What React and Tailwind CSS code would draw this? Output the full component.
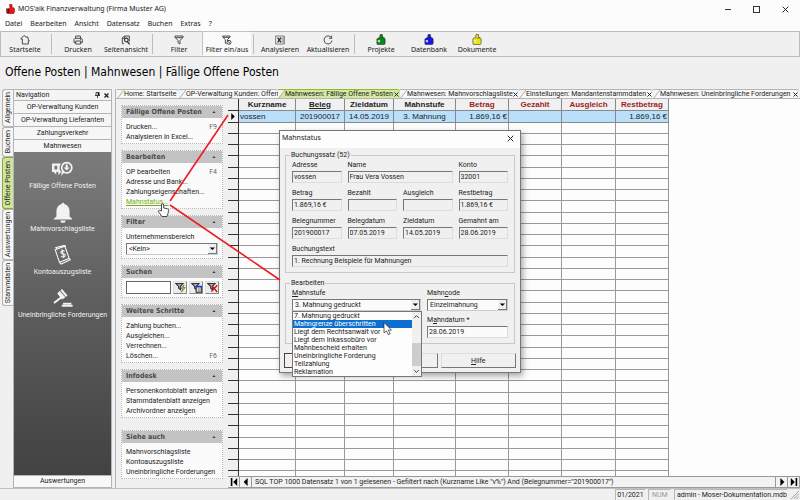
import React from "react";
import clsx from "clsx";

const LogoIcon = ({ color }) => (
  <svg viewBox="0 0 20 24" className="h-[11px] w-[10px]">
    <path
      d="M8 1h5l1 7h3l2 3v10l-2 2H2l-1-2V11l4-3h2z"
      fill={color}
      stroke="#222"
      strokeWidth="1.2"
    />
    <path d="M3 13h5v5H3z" fill="#e4e4e4" opacity=".85" />
    <path d="M9 9h7" stroke="#222" strokeWidth="1" fill="none" />
  </svg>
);

const AppLogo = () => (
  <svg viewBox="0 0 26 30" className="w-[9px] h-[10px]">
    <path
      d="M10 1h7l1 5v5h5l2 3v11l-3 4H5l-4-3V14h7l3-3z"
      fill="#e8141c"
      stroke="#7a1010"
      strokeWidth="1.5"
    />
    <path d="M2 18h6M2 25h6M8 14v12" stroke="#301010" strokeWidth="2.5" />
  </svg>
);

const Stroke = ({ children, className = "w-[10px] h-[10px]" }) => (
  <svg
    viewBox="0 0 30 30"
    className={className}
    fill="none"
    stroke="#333"
    strokeWidth="2.6"
    strokeLinejoin="round"
  >
    {children}
  </svg>
);

const TOOL_ICONS = {
  home: (
    <Stroke>
      <path d="M7 12v15h18V17h3l-4-5V6h-7l-3-4-4 1-8 9z" />
    </Stroke>
  ),
  print: (
    <Stroke>
      <path d="M8 10V3h14l1 7M7 23H3V13l3-3h18l4 3v10h-4M8 18h15v9H8zM21 14h3" />
    </Stroke>
  ),
  preview: (
    <Stroke>
      <path d="M9 26H4V9l6-6h15v17M4 10h7V3" />
      <circle cx="16" cy="15" r="5.5" strokeWidth="3.4" />
      <path d="M19 20l7 8" strokeWidth="4" />
    </Stroke>
  ),
  filter: (
    <Stroke>
      <path d="M3 3h24v4l-9 9v11l-6-4v-7L3 7zM4 8h22" />
    </Stroke>
  ),
  filterOff: (
    <Stroke>
      <path d="M2 3h22v3l-8 8v4M2 3v3l8 8v11l4 2M3 7h20" />
      <circle cx="21" cy="22" r="6" />
      <path d="M17 18l8 8" />
    </Stroke>
  ),
  excel: (
    <Stroke>
      <path d="M2 3h26v24H2zM20 9h7M20 15h7M20 21h7" strokeWidth="1.8" />
      <path d="M8 8l10 14M18 8L8 22" strokeWidth="4.5" />
    </Stroke>
  ),
  refresh: (
    <Stroke>
      <path d="M25 8a12 12 0 1 0 2 9M26 2v8h-8" />
    </Stroke>
  ),
  green: <LogoIcon color="#0a8a14" />,
  blue: <LogoIcon color="#1616f0" />,
  yellow: <LogoIcon color="#ece214" />,
};

const TOOLBAR = [
  [["home", "Startseite"]],
  [["print", "Drucken"], ["preview", "Seitenansicht"]],
  [["filter", "Filter"], ["filterOff", "Filter ein/aus"]],
  [["excel", "Analysieren"], ["refresh", "Aktualisieren"]],
  [["green", "Projekte"], ["blue", "Datenbank"], ["yellow", "Dokumente"]],
];

const MENU = ["Datei", "Bearbeiten", "Ansicht", "Datensatz", "Buchen", "Extras", "?"];

const SIDE_TABS = [
  { label: "Allgemein", size: "h-[38px]" },
  { label: "Buchen", size: "h-[30px]" },
  { label: "Offene Posten", size: "h-[52px]", active: true },
  { label: "Auswertungen", size: "h-[51px]" },
  { label: "Stammdaten", size: "h-[46px]" },
];

const DOC_TABS = [
  { label: "Home: Startseite", size: "w-[62px]" },
  { label: "OP-Verwaltung Kunden: Offen", size: "w-[99px]" },
  { label: "Mahnwesen: Fällige Offene Posten", size: "w-[122px]", active: true, closable: true },
  { label: "Mahnwesen: Mahnvorschlagsliste", size: "w-[119px]", closable: true },
  { label: "Einstellungen: Mandantenstammdaten", size: "w-[134px]", closable: true },
  { label: "Mahnwesen: Uneinbringliche Forderungen", size: "w-[146px]", closable: true },
];

const COLUMNS = [
  { label: "Kurzname", size: "w-[57px]", value: "vossen", align: "text-left" },
  { label: "Beleg", size: "w-[49px]", value: "201900017", align: "text-center", underline: true },
  { label: "Zieldatum", size: "w-[49px]", value: "14.05.2019", align: "text-center" },
  { label: "Mahnstufe", size: "w-[62px]", value: "3. Mahnung", align: "text-center" },
  { label: "Betrag", size: "w-[53px]", value: "1.869,16 €", align: "text-right", red: true },
  { label: "Gezahlt", size: "w-[53px]", value: "", align: "text-right", red: true },
  { label: "Ausgleich", size: "w-[54px]", value: "", align: "text-right", red: true },
  { label: "Restbetrag", size: "w-[53px]", value: "1.869,16 €", align: "text-right", red: true },
];

const OPTIONS = [
  "7. Mahnung gedruckt",
  "Mahngrenze überschritten",
  "Liegt dem Rechtsanwalt vor",
  "Liegt dem Inkassobüro vor",
  "Mahnbescheid erhalten",
  "Uneinbringliche Forderung",
  "Teilzahlung",
  "Reklamation",
];

const Cross = ({ className = "w-[5px] h-[5px]", width = 2 }) => (
  <svg viewBox="0 0 10 10" className={className} stroke="currentColor" strokeWidth={width}>
    <path d="M1 1l8 8M9 1L1 9" />
  </svg>
);

const TitleBar = () => (
  <header className="bg-[#fcfcfc] font-['Noto_Sans',sans-serif]">
    <div className="flex items-center h-[18px] pl-[6px] text-[7px] text-[#222]">
      <AppLogo />
      <span className="ml-[3px]">MOS'aik Finanzverwaltung (Firma Muster AG)</span>
      <div className="ml-auto flex items-center gap-[22px] pr-[11px]">
        <button aria-label="Minimieren" className="w-[6px] h-px bg-[#333]" />
        <button aria-label="Maximieren" className="w-[7px] h-[7px] border border-[#333]" />
        <button aria-label="Schließen">
          <Cross className="w-[7px] h-[7px]" width={1.4} />
        </button>
      </div>
    </div>
    <nav className="flex h-[13px] items-center gap-2 pl-[5px] text-[7px] text-[#222]">
      {MENU.map((item) => (
        <button key={item}>{item}</button>
      ))}
    </nav>
  </header>
);

const Toolbar = () => (
  <div className="flex h-[26px] items-stretch border border-[#bcbcbc] font-['Noto_Sans',sans-serif]">
    {TOOLBAR.map((group, i) => (
      <div key={i} className="flex">
        {i > 0 && <div className="w-px my-[2px] mx-[2px] bg-[#bcbcbc]" />}
        {group.map(([icon, label]) => (
          <button
            key={label}
            className={clsx(
              "flex w-12 flex-col items-center pt-[2px] text-[7px] leading-[10px] whitespace-nowrap text-[#222]",
              icon === "filterOff" && "bg-[#fafafa] shadow-[-1px_-1px_0_#c4c4c4]"
            )}
          >
            <span className="flex h-[11px] items-center">{TOOL_ICONS[icon]}</span>
            {label}
          </button>
        ))}
      </div>
    ))}
  </div>
);

const SideTabs = () => (
  <div className="flex w-[13px] shrink-0 flex-col pl-[2px]">
    {SIDE_TABS.map((tab) => (
      <button
        key={tab.label}
        className={clsx(
          "flex items-center justify-center rounded-l-[3px] border border-r-0",
          tab.size,
          tab.active ? "border-[#8aa83c] bg-[#cfe59a]" : "border-[#b4b4b4] bg-[#f6f6f6]"
        )}
      >
        <span className="rotate-180 whitespace-nowrap leading-[9px] [writing-mode:vertical-rl]">
          {tab.label}
        </span>
      </button>
    ))}
  </div>
);

const NavIcon = ({ icon, label }) => (
  <button className="flex h-[43px] flex-col items-center text-[#f2f2f2]">
    <span className="flex h-[22px] items-center">{icon}</span>
    <span className="mt-px leading-[10px]">{label}</span>
  </button>
);

const Navigation = () => (
  <aside className="flex w-[99px] shrink-0 flex-col border-x border-[#b4b4b4]">
    <div className="flex h-[11px] items-center border-t border-[#b4b4b4] bg-[#f4f4f4] pl-[2px] pr-[2px]">
      <span>Navigation</span>
      <svg viewBox="0 0 10 12" className="ml-auto h-[6px] w-[5px]" stroke="#111" fill="none">
        <path d="M2 1h6v6M2 1v6M0 7h10M5 7v5" strokeWidth="1.5" />
        <path d="M7 1v6" strokeWidth="3" />
      </svg>
      <button aria-label="Navigation schließen" className="ml-1">
        <Cross width={2.6} />
      </button>
    </div>
    {["OP-Verwaltung Kunden", "OP-Verwaltung Lieferanten", "Zahlungsverkehr", "Mahnwesen"].map(
      (item) => (
        <button key={item} className="h-[13px] border-t border-[#b4b4b4] bg-[#f6f6f6] leading-[12px]">
          {item}
        </button>
      )
    )}
    <div className="flex flex-1 flex-col bg-linear-to-b from-[#7c7c7c] via-[#5c5c5c] to-[#424242] pt-[6px]">
      <NavIcon
        label="Fällige Offene Posten"
        icon={
          <svg viewBox="0 0 60 48" className="h-[17px] w-[21px]" fill="currentColor">
            <path d="M0 7h26a18 18 0 0 0 0 24L18 40v-9h-6v8l-7-8H0zM7 13v11h8V13z" fillRule="evenodd" />
            <path d="M42 2a17 17 0 1 1-8 32l-8 8 2-14A17 17 0 0 1 42 2zm0 5a12 12 0 1 0 .1 0z" fillRule="evenodd" />
            <path d="M39 10h6v8h6l-9 9-9-9h6z" />
          </svg>
        }
      />
      <NavIcon
        label="Mahnvorschlagsliste"
        icon={
          <svg viewBox="0 0 60 64" className="h-[21px] w-[20px]" fill="currentColor">
            <path d="M26 6a4 4 0 0 1 8 0c11 3 16 11 16 22v16l8 7v2H2v-2l8-7V28C10 17 15 9 26 6zM22 56h16a8 7 0 0 1-16 0z" />
          </svg>
        }
      />
      <NavIcon
        label="Kontoauszugsliste"
        icon={
          <svg viewBox="0 0 50 60" className="h-[20px] w-[17px]" fill="none" stroke="currentColor">
            <path d="M3 14L32 4l13 36-29 12zM8 12L5 8 32 1l3 4M45 40l3 4-27 13-5-5" strokeWidth="3.4" />
            <path
              d="M31 19c-3-4-12-2-11 3 1 6 11 2 13 8 1 6-9 8-12 3M23 13l6 26"
              strokeWidth="3.4"
            />
          </svg>
        }
      />
      <NavIcon
        label="Uneinbringliche Forderungen"
        icon={
          <svg viewBox="0 0 60 56" className="h-[18px] w-[20px]" fill="currentColor">
            <path d="M22 4l5-4 17 20-5 5zM15 10l5-4 17 20-5 4zM12 14l4-3 15 18-4 4z" />
            <path d="M22 24l4 5L4 46l-4-5zM30 43h26v5H30zM26 49h34v6H26z" />
          </svg>
        }
      />
    </div>
    <button className="h-[13px] border-y border-[#b4b4b4] bg-[#f8f8f8] leading-[11px]">
      Auswertungen
    </button>
  </aside>
);

const Panel = ({ title, items, children, className }) => (
  <section className={clsx("border border-dotted border-[#b8b8b8] bg-[#fbfbfb]", className)}>
    <h2 className="flex h-[12px] items-center justify-between bg-[#c3c3c3] pl-1 pr-[6px] font-['DejaVu_Sans_Condensed',sans-serif] font-bold text-[#4a4a4a]">
      {title}
      <svg viewBox="0 0 6 4" className="h-[2px] w-[4px]" fill="#333">
        <path d="M3 0l3 4H0z" />
      </svg>
    </h2>
    {items && (
      <ul className="px-1 pt-1 pb-px leading-[10px] whitespace-nowrap">
        {items.map(([label, key, active]) => (
          <li key={label} className="flex justify-between pr-[1px]">
            <a href="#" className={active ? "text-[#76ac1a] underline" : "text-[#222]"}>
              {label}
            </a>
            {key && <span className="text-[#666]">{key}</span>}
          </li>
        ))}
      </ul>
    )}
    {children}
  </section>
);

const Arrow = () => (
  <svg
    viewBox="0 0 10 12"
    className="pointer-events-none absolute right-px top-px h-[10px] w-[9px] border-b border-r border-[#777] bg-[#f0f0f0]"
  >
    <path d="M2 4.500h7L5.500 8z" fill="#000" />
  </svg>
);

const Combo = ({ id, value, className }) => (
  <div className={clsx("relative", className)}>
    <select
      id={id}
      className="block h-[12px] w-full appearance-none border border-[#777] border-b-[#ccc] border-r-[#ccc] bg-[#fbfbfb] pl-[2px] leading-[10px] outline-none"
    >
      <option>{value}</option>
    </select>
    <Arrow />
  </div>
);

const SearchButton = ({ label, children }) => (
  <button
    aria-label={label}
    className="flex h-[13px] w-[14px] items-center justify-center border border-[#ddd] border-b-[#888] border-r-[#888] bg-[#ececec]"
  >
    <svg viewBox="0 0 30 30" className="h-[11px] w-[11px]" fill="none" strokeWidth="3">
      <path d="M2 4h20l-7 8v9l-5-4v-5z" stroke="#333" fill="#aab" />
      {children}
    </svg>
  </button>
);

const TaskPane = () => (
  <div className="flex w-[113px] shrink-0 flex-col gap-[6px] border-l border-[#b4b4b4] px-[5px] pt-[6px]">
    <Panel
      title="Fällige Offene Posten"
      items={[["Drucken...", "F9"], ["Analysieren in Excel..."]]}
    />
    <Panel
      title="Bearbeiten"
      items={[
        ["OP bearbeiten", "F4"],
        ["Adresse und Bank..."],
        ["Zahlungseigenschaften..."],
        ["Mahnstatus...", null, true],
      ]}
    />
    <Panel title="Filter">
      <div className="px-1 pt-1 pb-[3px]">
        <label htmlFor="bereich" className="block leading-[10px]">
          Unternehmensbereich
        </label>
        <Combo id="bereich" value="<Kein>" className="mt-px" />
      </div>
    </Panel>
    <Panel title="Suchen">
      <div className="flex items-center gap-[2px] pl-1 pr-[3px] py-[3px]">
        <input
          aria-label="Suchen"
          className="h-[13px] min-w-0 flex-1 border border-[#666] bg-white"
        />
        <SearchButton label="Suche starten">
          <path d="M25 8l-9 10h6l-5 10 11-13h-6z" fill="#f4e400" stroke="#444" strokeWidth="1.5" />
        </SearchButton>
        <SearchButton label="Suche im Formular">
          <path d="M14 12h14v16H14z" fill="#fff" stroke="#223" />
          <path d="M14 13h14" stroke="#1438e0" strokeWidth="4" />
          <path d="M18 19h7M18 24h7" stroke="#334" strokeWidth="2" />
        </SearchButton>
        <SearchButton label="Suche löschen">
          <path d="M13 10l15 17M28 9L12 26" stroke="#c01818" strokeWidth="4" />
        </SearchButton>
      </div>
    </Panel>
    <Panel
      title="Weitere Schritte"
      items={[["Zahlung buchen..."], ["Ausgleichen..."], ["Verrechnen..."], ["Löschen...", "F6"]]}
    />
    <Panel
      title="Infodesk"
      items={[
        ["Personenkontoblatt anzeigen"],
        ["Stammdatenblatt anzeigen"],
        ["Archivordner anzeigen"],
      ]}
    />
    <Panel
      title="Siehe auch"
      className="mt-[6px]"
      items={[["Mahnvorschlagsliste"], ["Kontoauszugsliste"], ["Uneinbringliche Forderungen"]]}
    />
  </div>
);

const DocTabs = () => (
  <div className="flex h-[10px] shrink-0 border-b border-l border-[#b4b4b4] pl-px">
    {DOC_TABS.map((tab) => (
      <div
        key={tab.label}
        className={clsx(
          "flex shrink-0 items-center rounded-tr-[3px] border-t",
          tab.size,
          tab.active ? "border-[#8cc020] bg-[#d3e8a0]" : "border-[#b4b4b4] bg-[#f8f8f8]"
        )}
      >
        <svg viewBox="0 0 8 10" className="h-[9px] w-[7px] shrink-0" preserveAspectRatio="none">
          <path d="M0 0h8L0 10z" fill="#f4f4f4" />
          <path d="M8 0L0 10" stroke="#a4a4a4" />
        </svg>
        <button className="whitespace-nowrap text-left leading-[9px]">{tab.label}</button>
        {tab.closable && (
          <button aria-label="Register schließen" className="ml-auto mr-px shrink-0">
            <Cross />
          </button>
        )}
      </div>
    ))}
  </div>
);

const DataGrid = () => (
  <div className="min-h-0 flex-1 overflow-hidden bg-[#fdfdfd]">
    <table className="table-fixed border-separate border-spacing-0 w-[441px] font-['Liberation_Sans',sans-serif] text-[8px] leading-[10px]">
      <thead>
        <tr className="h-[12px]">
          <th className="w-[11px] border-b border-r border-[#333] bg-[#f0f0f0] p-0" />
          {COLUMNS.map((col) => (
            <th
              key={col.label}
              className={clsx(
                "border-b border-r border-[#888] bg-[#f0f0f0] p-0 font-bold",
                col.size,
                col.red && "text-[#9c1c1c]",
                col.underline && "underline"
              )}
            >
              {col.label}
            </th>
          ))}
        </tr>
      </thead>
      <tbody>
        <tr className="h-[12px]">
          <td className="border-b border-r border-[#333] bg-[#f0f0f0] p-0">
            <svg viewBox="0 0 4 8" className="ml-[3px] h-[7px] w-[4px]">
              <path d="M0 0l4 4-4 4z" />
            </svg>
          </td>
          {COLUMNS.map((col) => (
            <td
              key={col.label}
              className={clsx(
                "whitespace-nowrap border-b border-r border-[#888] bg-[#b9dffb] py-0 pl-px pr-px text-[#222]",
                col.align
              )}
            >
              {col.value}
            </td>
          ))}
        </tr>
        {Array.from({ length: 32 }, (_, row) => (
          <tr key={row} className={row % 4 === 3 ? "h-[12px]" : "h-[11px]"}>
            <td className="border-b border-r border-[#333] bg-[#f0f0f0] p-0" />
            {COLUMNS.map((col) => (
              <td key={col.label} className="border-b border-r border-[#999] p-0" />
            ))}
          </tr>
        ))}
      </tbody>
    </table>
  </div>
);

const RecordButton = ({ label, d }) => (
  <button
    aria-label={label}
    className="flex w-[12px] items-center justify-center border-r border-[#999] bg-[#f2f2f2]"
  >
    <svg viewBox="0 0 10 10" className="h-[8px] w-[8px]">
      <path d={d} />
    </svg>
  </button>
);

const RecordBar = () => (
  <div className="flex h-[12px] shrink-0 border-y border-[#999] bg-[#f2f2f2]">
    <RecordButton label="Erster Datensatz" d="M1 0h2v10H1zM9 0v10L4 5z" />
    <RecordButton label="Vorheriger Datensatz" d="M7 0v10L2 5z" />
    <span className="flex-1 overflow-hidden whitespace-nowrap border-r border-[#999] pl-[3px] leading-[10px]">
      SQL TOP 1000 Datensatz 1 von 1 gelesenen - Gefiltert nach (Kurzname Like "v%") And
      (Belegnummer="201900017")
    </span>
    <RecordButton label="Nächster Datensatz" d="M3 0v10l5-5z" />
    <RecordButton label="Letzter Datensatz" d="M1 0v10l5-5zM7 0h2v10H7z" />
  </div>
);

const Field = ({ id, label, value, className, white }) => (
  <div className={className}>
    <label htmlFor={id} className="block h-[11px] leading-[10px]">
      {label}
    </label>
    <input
      id={id}
      defaultValue={value}
      className={clsx(
        "block h-[12px] w-full border border-[#777] border-b-[#ddd] border-r-[#ddd] pl-px leading-[10px]",
        white ? "bg-[#fbfbfb]" : "bg-[#f0f0f0]"
      )}
    />
  </div>
);

const MahnstatusDialog = () => (
  <div
    role="dialog"
    aria-label="Mahnstatus"
    className="absolute left-[279px] top-[130px] w-[242px] border border-[#777] bg-[#f0f0f0] pb-1 shadow-[2px_3px_6px_rgba(0,0,0,0.35)]"
  >
    <div className="flex h-[17px] items-center justify-between bg-[#fdfdfd] pl-[2px] pr-[6px] pb-[3px] font-['Noto_Sans',sans-serif]">
      <span>Mahnstatus</span>
      <button aria-label="Dialog schließen">
        <Cross className="h-[7px] w-[7px]" width={1.4} />
      </button>
    </div>

    <fieldset className="mx-[5px] mt-[2px] border border-[#c8c8c8] px-[6px] pb-[5px]">
      <legend className="-ml-[2px] px-px leading-[10px]">Buchungssatz (52)</legend>
      <div className="grid grid-cols-4 gap-x-[6px] gap-y-[5px]">
        <Field id="adresse" label="Adresse" value="vossen" />
        <Field id="name" label="Name" value="Frau Vera Vossen" className="col-span-2" />
        <Field id="konto" label="Konto" value="32001" />
        <Field id="betrag" label="Betrag" value="1.869,16 €" />
        <Field id="bezahlt" label="Bezahlt" value="" />
        <Field id="ausgleich" label="Ausgleich" value="" />
        <Field id="restbetrag" label="Restbetrag" value="1.869,16 €" />
        <Field id="belegnummer" label="Belegnummer" value="201900017" />
        <Field id="belegdatum" label="Belegdatum" value="07.05.2019" />
        <Field id="zieldatum" label="Zieldatum" value="14.05.2019" />
        <Field id="gemahnt" label="Gemahnt am" value="28.06.2019" />
        <Field
          id="text"
          label="Buchungstext"
          value="1. Rechnung Beispiele für Mahnungen"
          className="col-span-4"
        />
      </div>
    </fieldset>

    <fieldset className="mx-[5px] mt-[5px] border border-[#c8c8c8] px-[6px] pb-[5px]">
      <legend className="-ml-[2px] px-px leading-[10px]">Bearbeiten</legend>
      <div className="flex gap-[6px]">
        <div className="relative w-[129px]">
          <label htmlFor="stufe" className="block h-[11px] leading-[10px]">
            <u>M</u>ahnstufe
          </label>
          <Combo id="stufe" value="3. Mahnung gedruckt" />
          {/* Opened list of the combo box */}
          <div className="absolute left-0 top-[23px] flex w-[130px] border border-[#777] bg-[#fdfdfd]">
            <ul role="listbox" aria-label="Mahnstufe" className="flex-1 leading-[8px]">
              {OPTIONS.map((option, i) => (
                <li
                  key={option}
                  role="option"
                  aria-selected={i === 1}
                  className={clsx("pl-px", i === 1 && "bg-[#0a6fd0] text-white")}
                >
                  {option}
                </li>
              ))}
            </ul>
            <div className="flex w-[9px] flex-col items-center bg-[#f0f0f0] py-[3px]">
              <svg viewBox="0 0 8 5" className="h-[3px] w-[5px]" fill="none" stroke="#333" strokeWidth="1.5">
                <path d="M0 5l4-4 4 4" />
              </svg>
              <div className="mt-[25px] h-[23px] w-full bg-[#cdcdcd]" />
              <svg viewBox="0 0 8 5" className="mt-auto h-[3px] w-[5px]" fill="none" stroke="#333" strokeWidth="1.5">
                <path d="M0 0l4 4 4-4" />
              </svg>
            </div>
          </div>
        </div>
        <div className="flex-1">
          <label htmlFor="code" className="block h-[11px] leading-[10px]">
            Mahn<u>c</u>ode
          </label>
          <Combo id="code" value="Einzelmahnung" />
          <Field
            id="datum"
            label={
              <>
                M<u>a</u>hndatum *
              </>
            }
            value="28.06.2019"
            className="mt-1"
            white
          />
        </div>
      </div>
    </fieldset>

    <div className="mt-[9px] grid grid-cols-3 gap-[3px] px-1">
      <button aria-label="OK" className="h-[15px] border border-[#444] bg-[#f0f0f0]" />
      <button
        aria-label="Abbrechen"
        className="h-[15px] border border-[#ddd] border-b-[#777] border-r-[#777] bg-[#f0f0f0]"
      />
      <button className="h-[15px] border border-[#ddd] border-b-[#777] border-r-[#777] bg-[#f0f0f0] leading-[12px]">
        <u>H</u>ilfe
      </button>
    </div>
  </div>
);

const Annotations = () => (
  <svg
    viewBox="0 0 800 500"
    className="pointer-events-none absolute left-0 top-0 h-[500px] w-[800px]"
    fill="none"
  >
    <path d="M228 115L170 201M170 205L280 280" stroke="#ee1c24" strokeWidth="1.6" />
    <path
      d="M161.500 211V205q0-1.300 1.100-1.300t1.100 1.300v3l4 .8q1 .4.900 1.500l-.6 3.200-1 3h-5l-3.400-4.600q-.4-1.500.9-1.600z"
      fill="#fff"
      stroke="#222"
      strokeWidth=".8"
    />
    <path
      d="M384 322.500v10.500l2.400-2.200 1.900 3.900 1.800-.9-1.800-3.700h3.200z"
      fill="#fff"
      stroke="#222"
      strokeWidth=".7"
    />
  </svg>
);

const StatusBar = () => (
  <footer className="flex h-[12px] shrink-0 items-center justify-end gap-[3px] border-t border-[#c0c0c0] pr-px">
    <span className="w-[30px] border-l border-t border-[#b8b8b8] text-center leading-[10px]">
      01/2021
    </span>
    <span className="w-[23px] border-l border-t border-[#b8b8b8] text-center leading-[10px] text-[#999]">
      NUM
    </span>
    <span className="border-l border-t border-[#b8b8b8] pl-[2px] leading-[10px]">
      admin - Moser-Dokumentation.mdb
    </span>
    <svg viewBox="0 0 10 10" className="h-[9px] w-[9px]" stroke="#999">
      <path d="M1 10l9-9M4 10l6-6M7 10l3-3" />
    </svg>
  </footer>
);

export default function App() {
  return (
    <div className="relative flex h-screen flex-col overflow-hidden bg-[#f0f0f0] font-['Roboto',sans-serif] text-[7px] text-[#222]">
      <TitleBar />
      <Toolbar />
      <h1 className="flex h-8 shrink-0 items-center pb-[3px] pl-[5px] font-['DejaVu_Sans_Condensed',sans-serif] text-[12px] text-black">
        Offene Posten | Mahnwesen | Fällige Offene Posten
      </h1>
      <main className="flex min-h-0 flex-1">
        <SideTabs />
        <Navigation />
        <div className="ml-[3px] flex min-w-0 flex-1 flex-col">
          <DocTabs />
          <div className="flex min-h-0 flex-1">
            <TaskPane />
            <div className="flex min-w-0 flex-1 flex-col">
              <DataGrid />
              <RecordBar />
            </div>
          </div>
        </div>
      </main>
      <StatusBar />
      <MahnstatusDialog />
      <Annotations />
    </div>
  );
}
